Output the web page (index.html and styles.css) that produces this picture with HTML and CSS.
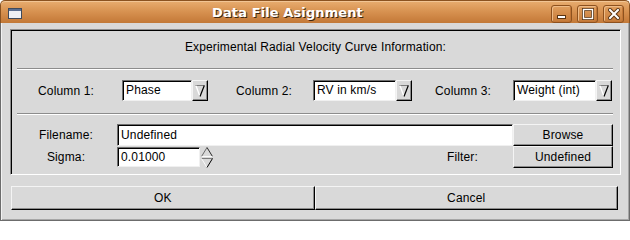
FILE: index.html
```html
<!DOCTYPE html>
<html>
<head>
<meta charset="utf-8">
<link rel="stylesheet" href="styles.css">
</head>
<body>
<div class="window">
  <div class="titlebar">
    <span class="app-icon">
      <svg width="14" height="11" viewBox="0 0 14 11">
        <rect x="0.5" y="0.5" width="13" height="10" fill="#eef0f4" stroke="#3f4a5c"/>
        <rect x="1" y="1" width="12" height="2" fill="#5b6e90"/>
      </svg>
    </span>
    <span class="title">Data File Asignment</span>
    <div class="wm-buttons">
      <span class="wm-btn">
        <svg width="12" height="12" viewBox="0 0 12 12">
          <rect x="1.5" y="7.5" width="8" height="3" fill="#fff" stroke="#5a3412"/>
        </svg>
      </span>
      <span class="wm-btn">
        <svg width="12" height="12" viewBox="0 0 12 12">
          <rect x="1.5" y="1.5" width="9" height="9" fill="none" stroke="#5a3412" stroke-width="3"/>
          <rect x="1.5" y="1.5" width="9" height="9" fill="none" stroke="#fff" stroke-width="1.4"/>
        </svg>
      </span>
      <span class="wm-btn">
        <svg width="12" height="12" viewBox="0 0 12 12">
          <path d="M2 2L10 10M10 2L2 10" stroke="#5a3412" stroke-width="4" stroke-linecap="square"/>
          <path d="M2 2L10 10M10 2L2 10" stroke="#fff" stroke-width="2" stroke-linecap="square"/>
        </svg>
      </span>
    </div>
  </div>
  <div class="client">
    <div class="frame">
      <div class="header">Experimental Radial Velocity Curve Information:</div>
      <div class="sep"></div>
      <div class="combo-row">
        <span class="lbl">Column 1:</span>
        <div class="combo">
          <span class="entry">Phase</span>
          <span class="drop"><svg width="10" height="12" viewBox="0 0 10 12"><path d="M0.5 0.5H9.5" stroke="#7c7c7c"/><path d="M1 0.8L5 11.5" stroke="#ffffff" stroke-width="1.3"/><path d="M9.3 0.5L5 11.5" stroke="#000" stroke-width="1.2"/></svg></span>
        </div>
        <span class="lbl lbl-2">Column 2:</span>
        <div class="combo">
          <span class="entry">RV in km/s</span>
          <span class="drop"><svg width="10" height="12" viewBox="0 0 10 12"><path d="M0.5 0.5H9.5" stroke="#7c7c7c"/><path d="M1 0.8L5 11.5" stroke="#ffffff" stroke-width="1.3"/><path d="M9.3 0.5L5 11.5" stroke="#000" stroke-width="1.2"/></svg></span>
        </div>
        <span class="lbl lbl-3">Column 3:</span>
        <div class="combo">
          <span class="entry">Weight (int)</span>
          <span class="drop"><svg width="10" height="12" viewBox="0 0 10 12"><path d="M0.5 0.5H9.5" stroke="#7c7c7c"/><path d="M1 0.8L5 11.5" stroke="#ffffff" stroke-width="1.3"/><path d="M9.3 0.5L5 11.5" stroke="#000" stroke-width="1.2"/></svg></span>
        </div>
      </div>
      <div class="sep"></div>
      <div class="file-grid">
        <span class="flbl">Filename:</span>
        <span class="entry file-entry">Undefined</span>
        <span class="btn">Browse</span>
        <span class="flbl">Sigma:</span>
        <div class="sigma-cell">
          <span class="entry sigma-entry">0.01000</span>
          <span class="spin">
            <svg width="12" height="21" viewBox="0 0 12 21">
              <path d="M0.5 9.5L6 0.5" stroke="#6a6a6a"/>
              <path d="M6 0.5L11.5 9.5" stroke="#2a2a2a"/>
              <path d="M0.5 9.5H11.5" stroke="#fafafa"/>
              <path d="M0.5 11.5H11.5" stroke="#7c7c7c"/>
              <path d="M0.5 11.5L6 20.5" stroke="#fafafa"/>
              <path d="M11.5 11.5L6 20.5" stroke="#000"/>
            </svg>
          </span>
          <span class="filter-lbl">Filter:</span>
        </div>
        <span class="btn">Undefined</span>
      </div>
    </div>
    <div class="actions">
      <span class="btn big">OK</span>
      <span class="btn big">Cancel</span>
    </div>
  </div>
</div>
</body>
</html>
```

FILE: styles.css
```css
* { box-sizing: border-box; }

body {
  margin: 0;
  background: #ffffff;
  font-family: "Liberation Sans", Arial, sans-serif;
  font-size: 12px;
  letter-spacing: 0.15px;
  color: #000;
}

.window {
  width: 630px;
  height: 221px;
  display: flex;
  flex-direction: column;
}

/* ---------- title bar ---------- */
.titlebar {
  height: 23px;
  flex: none;
  display: flex;
  align-items: center;
  border: 1px solid #8a5220;
  border-bottom: none;
  border-radius: 5px 5px 0 0;
  background: linear-gradient(#e8ad70 0%, #da9655 40%, #cd8443 75%, #c27938 100%);
  box-shadow: inset 0 1px 0 #f2c594;
  overflow: hidden;
}

.app-icon {
  display: flex;
  margin-left: 7px;
  margin-top: 2px;
}

.title {
  flex: 1;
  text-align: center;
  padding-left: 2px;
  color: #fff;
  font-family: "DejaVu Sans", sans-serif;
  font-weight: bold;
  font-size: 13px;
  letter-spacing: 0.1px;
  text-shadow: 1px 1px 0 #3e2610;
}

.wm-buttons {
  display: flex;
  gap: 5px;
  margin-right: 5px;
  margin-top: 4px;
  align-self: flex-start;
}

.wm-btn {
  width: 21px;
  height: 18px;
  display: flex;
  align-items: center;
  justify-content: center;
  border: 1px solid #8d511e;
  border-radius: 3px;
  box-shadow: inset 1px 1px 0 #eebb87, inset -1px -1px 0 #c27636;
}

/* ---------- client ---------- */
.client {
  flex: 1;
  background: #d9d9d9;
  border: 1px solid #6c6c6c;
  border-top: none;
  box-shadow: inset 1px 0 0 #f2f2f2, inset -1px -1px 0 #a6a6a6;
  padding: 6px 8px 0 9px;
  display: flex;
  flex-direction: column;
}

.frame {
  height: 146px;
  border: 1px solid;
  border-color: #8c8c8c #ffffff #ffffff #8c8c8c;
  box-shadow: inset 1px 1px 0 #000;
  display: flex;
  flex-direction: column;
}

.header {
  height: 38px;
  padding-top: 10px;
  line-height: 14px;
  text-align: center;
}

.sep {
  height: 2px;
  margin: 0 7px 0 6px;
  border-top: 1px solid #8c8c8c;
  border-bottom: 1px solid #ffffff;
}

.combo-row {
  display: grid;
  grid-template-columns: 84px 86px 105px 99px 101px 99px;
  align-items: center;
  padding: 10px 0 12px 27px;
}

.lbl { white-space: nowrap; line-height: 14px; }
.lbl-2 { padding-left: 28px; }
.lbl-3 { padding-left: 23px; }

.combo {
  display: flex;
  height: 21px;
}

.entry {
  display: block;
  background: #fff;
  border: 1px solid;
  border-color: #6e6e6e #f0f0f0 #f0f0f0 #6e6e6e;
  box-shadow: inset 1px 1px 0 #000;
  padding-left: 3px;
  line-height: 19px;
  white-space: nowrap;
  overflow: hidden;
}

.combo .entry { flex: 1; }

.drop {
  width: 16px;
  flex: none;
  display: flex;
  align-items: center;
  justify-content: center;
  background: #d9d9d9;
  border: 1px solid;
  border-color: #f4f4f4 #000 #000 #f4f4f4;
  box-shadow: inset -1px -1px 0 #8c8c8c;
}

.file-grid {
  display: grid;
  grid-template-columns: 106px 396px 100px;
  grid-auto-rows: 22px;
  align-items: center;
  padding-top: 9px;
}

.flbl {
  text-align: center;
  padding-left: 4px;
}

.file-entry { height: 22px; line-height: 20px; }

.sigma-cell {
  display: flex;
  align-items: center;
}

.sigma-entry {
  width: 83px;
  height: 20px;
  line-height: 18px;
}

.spin {
  display: flex;
  margin-left: 1px;
}

.filter-lbl {
  margin-left: auto;
  margin-right: 35px;
}

.btn {
  display: flex;
  align-items: center;
  justify-content: center;
  height: 22px;
  background: #d9d9d9;
  border: 1px solid;
  border-color: #f4f4f4 #000 #000 #f4f4f4;
  box-shadow: inset -1px -1px 0 #8c8c8c;
  white-space: nowrap;
}

.actions {
  display: grid;
  grid-template-columns: 1fr 1fr;
  margin: 11px 3px 0 1px;
}

.btn.big { height: 24px; }
```
